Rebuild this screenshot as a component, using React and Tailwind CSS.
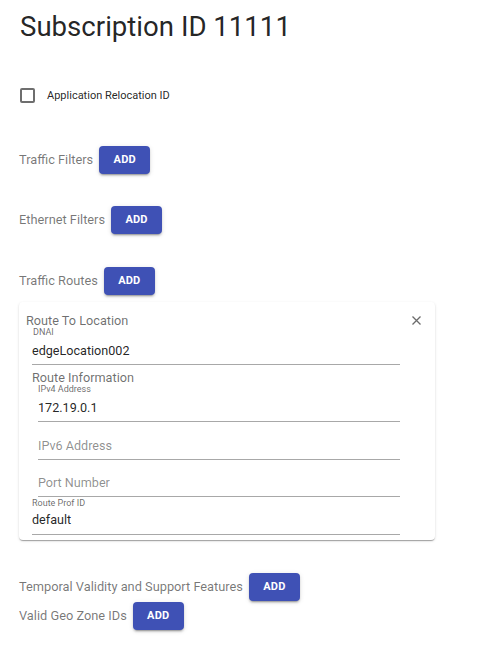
import React from "react";

function AddButton() {
  return (
    <button className="w-[51px] h-[28px] shrink-0 rounded-[4px] bg-[#3f51b5] text-white text-[11px] font-bold tracking-[0.2px] shadow-[0_3px_1px_-2px_rgba(0,0,0,0.2),0_2px_2px_0_rgba(0,0,0,0.14),0_1px_5px_0_rgba(0,0,0,0.12)] flex items-center justify-center">
      ADD
    </button>
  );
}

function Row({ label, className = "" }) {
  return (
    <div className={"flex items-center gap-[6px] " + className}>
      <span className="text-[12.8px] leading-[16px] text-[rgba(0,0,0,0.54)]">{label}</span>
      <AddButton />
    </div>
  );
}

export default function App() {
  return (
    <div className="w-[496px] h-[654px] bg-white font-['Roboto',sans-serif] pl-[19px] pt-[11px]">
      <h1 className="text-[27.6px] leading-[32px] text-[rgba(0,0,0,0.87)] pl-[1px]">Subscription ID 11111</h1>

      <div className="flex items-center mt-[45px] pl-[1px] h-[15px]">
        <div className="w-[15px] h-[15px] border-2 border-[#6e6e6e] rounded-[2px]" />
        <span className="ml-[12px] text-[11px] leading-[15px] text-[rgba(0,0,0,0.87)]">Application Relocation ID</span>
      </div>

      <Row label="Traffic Filters" className="mt-[43px]" />
      <Row label="Ethernet Filters" className="mt-[32px]" />
      <Row label="Traffic Routes" className="mt-[33px]" />

      <div className="relative mt-[7px] w-[416px] rounded-[4px] bg-white shadow-[0_2px_1px_-1px_rgba(0,0,0,0.2),0_1px_1px_0_rgba(0,0,0,0.14),0_1px_3px_0_rgba(0,0,0,0.12)] pl-[7px] pt-[12px] pb-[5px]">
        <svg className="absolute right-[14px] top-[14px]" width="9" height="9" viewBox="0 0 9 9">
          <path d="M0.5 0.5L8.5 8.5M8.5 0.5L0.5 8.5" stroke="#6b6b6b" strokeWidth="1.3" />
        </svg>
        <div className="text-[12.7px] leading-[14px] text-[rgba(0,0,0,0.58)]">Route To Location</div>

        <div className="pl-[6px]">
          <div className="w-[368px] border-b border-[#a8a8a8] pb-[5px]">
            <div className="pl-[1px] text-[9px] leading-[9px] text-[rgba(0,0,0,0.6)]">DNAI</div>
            <div className="pt-[6px] text-[12.6px] leading-[16px] text-[rgba(0,0,0,0.87)]">edgeLocation002</div>
          </div>

          <div className="mt-[6px] text-[12.7px] leading-[14px] text-[rgba(0,0,0,0.58)]">Route Information</div>

          <div className="pl-[6px]">
            <div className="w-[362px] border-b border-[#a8a8a8] pb-[5px]">
              <div className="text-[9px] leading-[9px] text-[rgba(0,0,0,0.6)]">IPv4 Address</div>
              <div className="pt-[6px] text-[12.6px] leading-[16px] text-[rgba(0,0,0,0.87)]">172.19.0.1</div>
            </div>
            <div className="mt-[16px] w-[362px] border-b border-[#a8a8a8] pb-[5px]">
              <div className="text-[12.6px] leading-[16px] text-[rgba(0,0,0,0.45)]">IPv6 Address</div>
            </div>
            <div className="mt-[15px] w-[362px] border-b border-[#a8a8a8] pb-[5px]">
              <div className="text-[12.6px] leading-[16px] text-[rgba(0,0,0,0.45)]">Port Number</div>
            </div>
          </div>

          <div className="mt-[2px] w-[368px] border-b border-[#a8a8a8] pb-[6px]">
            <div className="text-[9px] leading-[9px] text-[rgba(0,0,0,0.6)]">Route Prof ID</div>
            <div className="pt-[4px] text-[12.6px] leading-[16px] text-[rgba(0,0,0,0.87)]">default</div>
          </div>
        </div>
      </div>

      <Row label="Temporal Validity and Support Features" className="mt-[33px]" />
      <Row label="Valid Geo Zone IDs" className="mt-[1px]" />
    </div>
  );
}
